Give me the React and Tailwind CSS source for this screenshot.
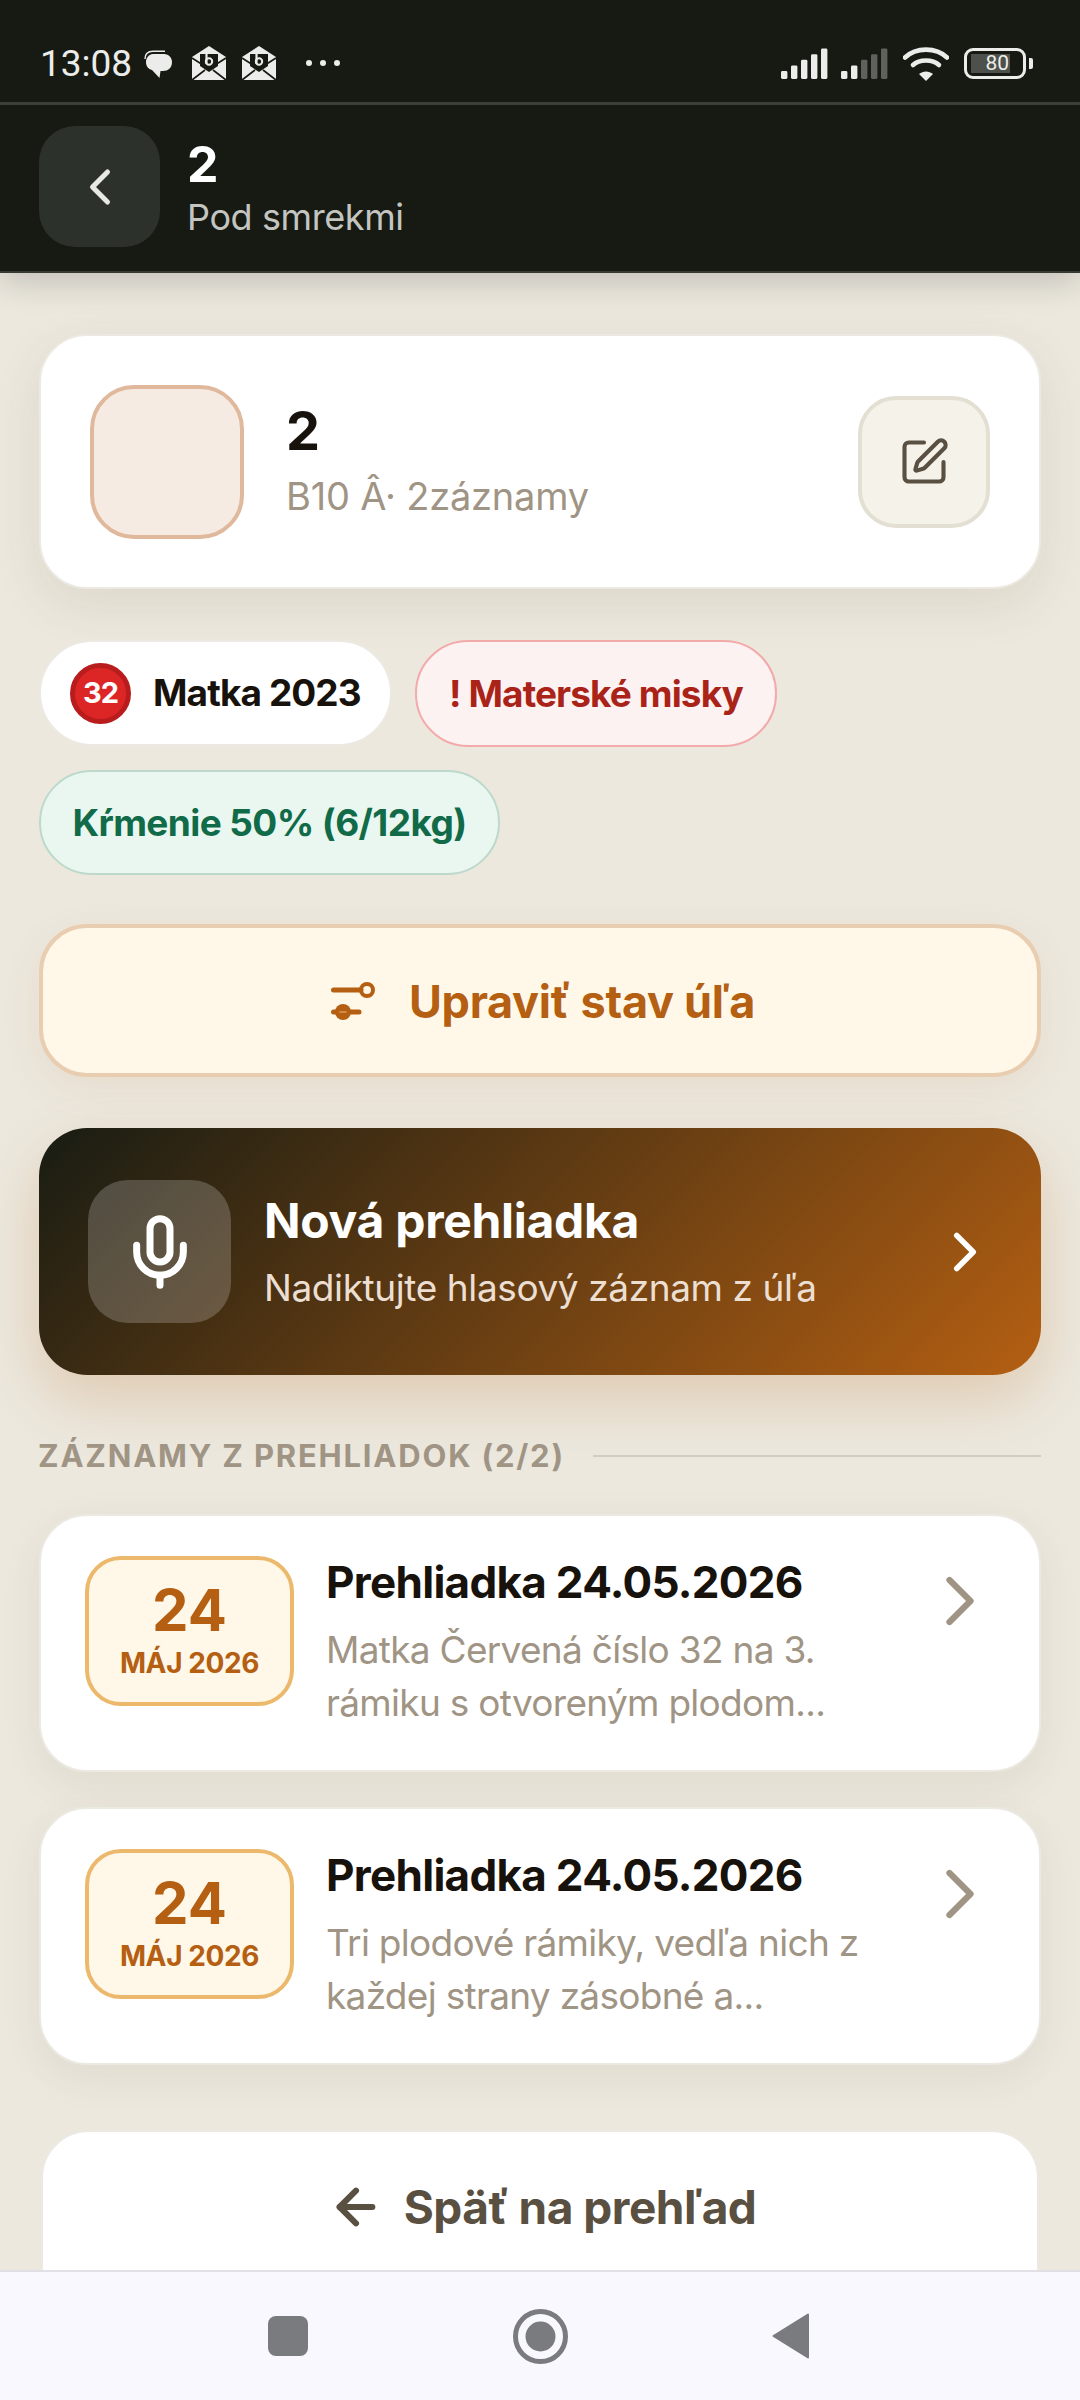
import { ChevronLeft, ChevronRight, SquarePen, Mic, ArrowLeft } from 'lucide-react';

const records = [
  { text: ['Matka Červená číslo 32 na 3.', 'rámiku s otvoreným plodom...'] },
  { text: ['Tri plodové rámiky, vedľa nich z', 'každej strany zásobné a...'] },
];

function Signal({ dim }) {
  const bars = [0, 1, 2, 3, 4];
  return (
    <svg width="48" height="31" viewBox="0 0 48 31">
      {bars.map((i) => {
        const h = 8 + i * 5.6;
        return (
          <rect
            key={i}
            x={i * 10}
            y={31 - h}
            width="6.4"
            height={h}
            rx="1.4"
            fill={dim && i >= 2 ? '#5f625c' : '#ececea'}
          />
        );
      })}
    </svg>
  );
}

function Envelope() {
  return (
    <svg width="36" height="35" viewBox="0 0 36 35">
      <path d="M18 0 L35 11 L35 34 L1 34 L1 11 Z" fill="#ececea" />
      <path d="M1 12 L12 19 M35 12 L24 19 M1 34 L14 24 M35 34 L22 24" stroke="#161a13" strokeWidth="1.6" />
      <path d="M9 8 H27 V20 L18 26 L9 20 Z" fill="#161a13" />
      <path d="M15.5 8 V18" stroke="#ececea" strokeWidth="2.2" />
      <circle cx="18" cy="15.5" r="3.2" fill="none" stroke="#ececea" strokeWidth="2" />
    </svg>
  );
}

function StatusBar() {
  return (
    <div className="h-[102px] flex items-end justify-between pl-[40px] pr-[47px] pb-[21px] font-['Roboto',sans-serif] text-[#ececea]">
      <div className="flex items-center">
        <span className="text-[37px] leading-[34px]">13:08</span>
        <svg className="ml-[12px]" width="29" height="29" viewBox="0 0 29 29">
          <path d="M1 9 C1 4 4 1.200 9 1.200 H21" stroke="#ececea" strokeWidth="1.400" fill="none" />
          <path d="M9 4 H20 C25 4 28 8 28 12 C28 18 24 21 19 21 H16.500 L15.500 28 L8 20 C4 19 2 16 2 12 C2 8 5 4 9 4 Z" fill="#ececea" />
        </svg>
        <div className="flex gap-[14px] ml-[18px] -mt-[2px]">
          <Envelope />
          <Envelope />
        </div>
        <div className="flex gap-[8px] ml-[29px] -mt-[2px]">
          <span className="w-[6px] h-[6px] rounded-full bg-[#ececea]" />
          <span className="w-[6px] h-[6px] rounded-full bg-[#ececea]" />
          <span className="w-[6px] h-[6px] rounded-full bg-[#ececea]" />
        </div>
      </div>
      <div className="flex items-center">
        <Signal />
        <div className="ml-[12px]"><Signal dim /></div>
        <svg className="ml-[14px]" width="46" height="35" viewBox="0 0 46 35">
          <path d="M2 11.500 C13 1 33 1 44 11.500" fill="none" stroke="#ececea" strokeWidth="4.600" strokeLinecap="round" />
          <path d="M10 19 C16.500 13 29.500 13 36 19" fill="none" stroke="#ececea" strokeWidth="4.600" strokeLinecap="round" />
          <path d="M23 35 L16 28 C20 24.500 26 24.500 30 28 Z" fill="#ececea" />
        </svg>
        <div className="ml-[15px] w-[62px] h-[31px] rounded-[9px] border-[3px] border-[#ececea] flex items-center pl-[4px]">
          <div className="w-[39px] h-[19px] bg-[#4d504b] flex items-center justify-end pr-[1px] text-[21px] leading-none">80</div>
        </div>
        <div className="ml-[3px] w-[4px] h-[11px] rounded-r-[2px] bg-[#ececea]" />
      </div>
    </div>
  );
}

function Header() {
  return (
    <div className="relative z-10 bg-[#161a13] h-[273px] border-b-2 border-[#363a32] shadow-[0_8px_32px_rgba(22,26,19,0.2)]">
      <StatusBar />
      <div className="h-[3px] bg-[#3a4039]" />
      <div className="flex items-center pl-[39px] pt-[21px]">
        <div className="w-[121px] h-[121px] rounded-[36px] bg-[#2d312b] flex items-center justify-center">
          <ChevronLeft size={60} strokeWidth={2} className="text-[#e8e8e4]" />
        </div>
        <div className="ml-[27px] mt-[1px]">
          <div className="text-[50px] leading-[58px] font-bold text-white">2</div>
          <div className="mt-[1px] text-[36px] leading-[46px] tracking-[-0.4px] text-[#c4c5c1]">Pod smrekmi</div>
        </div>
      </div>
    </div>
  );
}

function HiveCard() {
  return (
    <div className="h-[255px] rounded-[48px] bg-white border-2 border-[#ece9e2] shadow-[0_16px_50px_rgba(90,70,40,0.10)] flex items-center pl-[49px] pr-[49px]">
      <div className="w-[154px] h-[154px] rounded-[44px] bg-[#f5ebe2] border-[4px] border-[#e0b89c]" />
      <div className="ml-[42px] flex-1">
        <div className="-mt-[3px] text-[54px] leading-[62px] font-bold text-[#17120c]">2</div>
        <div className="mt-[10px] text-[38px] leading-[48px] tracking-[-0.2px] text-[#a09484]">B10 Â· 2záznamy</div>
      </div>
      <div className="w-[132px] h-[132px] rounded-[38px] bg-[#f5f2ea] border-[4px] border-[#e3dfd3] flex items-center justify-center">
        <SquarePen size={52} strokeWidth={1.9} className="text-[#5a5042]" />
      </div>
    </div>
  );
}

function Chips() {
  return (
    <div className="mt-[51px] flex flex-wrap gap-x-[23px] gap-y-[23px]">
      <div className="w-[353px] h-[106px] rounded-[53px] bg-white border-2 border-[#ece9e2] flex items-center pl-[29px]">
        <div className="w-[61px] h-[61px] rounded-full bg-[#dc2626] border-[5px] border-[#b91c1c] flex items-center justify-center text-white text-[29px] font-bold tracking-[-1px]">32</div>
        <span className="ml-[22px] text-[37px] font-bold tracking-[-0.9px] text-[#17120c]">Matka 2023</span>
      </div>
      <div className="w-[362px] h-[107px] rounded-[53px] bg-[#fdf2f2] border-2 border-[#f3aaaa] flex items-center justify-center text-[37px] font-bold tracking-[-0.9px] text-[#aa2318]">! Materské misky</div>
      <div className="w-[461px] h-[105px] rounded-[53px] bg-[#e9f7f0] border-2 border-[#bcd9cb] flex items-center justify-center text-[37px] font-bold tracking-[-0.6px] text-[#116a48]">Kŕmenie 50% (6/12kg)</div>
    </div>
  );
}

function HiveStateButton() {
  return (
    <div className="mt-[49px] h-[153px] rounded-[48px] bg-[#fff8e9] border-[4px] border-[#e8cdb0] shadow-[0_12px_40px_rgba(176,94,18,0.08)] flex items-center justify-center text-[#b45f12]">
      <svg className="ml-[6px]" width="44" height="40" viewBox="0 0 44 40" fill="none" stroke="currentColor" strokeLinecap="round">
        <path d="M2.500 9 H30" strokeWidth="5" />
        <circle cx="36" cy="9" r="6" strokeWidth="4" />
        <path d="M2.500 31 H28" strokeWidth="5" />
        <circle cx="12" cy="31" r="8" fill="currentColor" stroke="none" />
        <path d="M9 31 H15" stroke="#d99a5c" strokeWidth="1.500" />
      </svg>
      <span className="ml-[34px] mt-[3px] text-[45px] font-bold tracking-[-0.3px]">Upraviť stav úľa</span>
    </div>
  );
}

function NewInspection() {
  return (
    <div className="mt-[51px] h-[247px] rounded-[48px] bg-[linear-gradient(135deg,#181c13,#b45f12)] shadow-[0_24px_60px_rgba(176,94,18,0.22)] flex items-center pl-[49px] pr-[43px]">
      <div className="w-[143px] h-[143px] rounded-[40px] bg-white/20 flex items-center justify-center">
        <Mic size={80} strokeWidth={2.1} className="text-white" />
      </div>
      <div className="ml-[33px] flex-1">
        <div className="text-[48px] leading-[58px] font-bold tracking-[-0.3px] text-white">Nová prehliadka</div>
        <div className="mt-[15px] text-[37px] leading-[46px] tracking-[-0.4px] text-[#ecdfd2]">Nadiktujte hlasový záznam z úľa</div>
      </div>
      <ChevronRight size={66} strokeWidth={2} className="text-white" />
    </div>
  );
}

function RecordCard({ lines }) {
  return (
    <div className="h-[258px] rounded-[48px] bg-white border-2 border-[#ece9e2] shadow-[0_12px_40px_rgba(90,70,40,0.08)] flex items-start pl-[44px] pr-[37px] pt-[40px]">
      <div className="w-[209px] h-[150px] shrink-0 rounded-[36px] bg-[#fff7e8] border-[4px] border-[#ecb96c] flex flex-col items-center justify-center text-[#b45f12]">
        <div className="-mt-[3px] text-[58px] leading-[62px] font-bold">24</div>
        <div className="mt-[4px] text-[28px] leading-[36px] font-bold tracking-[-0.4px]">MÁJ 2026</div>
      </div>
      <div className="ml-[32px] flex-1 -mt-[3px]">
        <div className="text-[44px] leading-[58px] font-bold tracking-[-0.7px] text-[#17120c]">Prehliadka 24.05.2026</div>
        <div className="mt-[12px] text-[37px] leading-[53px] tracking-[-0.7px] text-[#a09484]">
          {lines.map((l) => <div key={l}>{l}</div>)}
        </div>
      </div>
      <ChevronRight size={84} strokeWidth={1.8} className="text-[#a09484] mt-[3px] shrink-0" />
    </div>
  );
}

export default function App() {
  return (
    <div className="relative w-[1080px] h-[2400px] overflow-hidden bg-[#ece8de] font-['Inter',sans-serif]">
      <Header />
      <div className="px-[39px] pt-[61px]">
        <HiveCard />
        <Chips />
        <HiveStateButton />
        <NewInspection />

        <div className="mt-[59px] -ml-[1px] flex items-center">
          <span className="text-[31px] leading-[44px] font-bold tracking-[1.800px] text-[#a09484]">ZÁZNAMY Z PREHLIADOK (2/2)</span>
          <div className="ml-[28px] flex-1 h-[2px] bg-[#d4ccc0]" />
        </div>

        <div className="mt-[36px] flex flex-col gap-[35px]">
          {records.map((r, i) => <RecordCard key={i} lines={r.text} />)}
        </div>

        <div className="mt-[65px] mx-[2px] h-[200px] rounded-[48px] bg-white border-2 border-[#ece9e2] flex items-start justify-center pt-[45px] text-[#5a5042]">
          <ArrowLeft size={56} strokeWidth={2.6} className="ml-[4px] mt-[2px]" />
          <span className="ml-[20px] text-[46px] leading-[60px] font-bold tracking-[-0.5px]">Späť na prehľad</span>
        </div>
      </div>

      {/* android nav */}
      <div className="absolute bottom-0 left-0 w-full h-[130px] bg-[#f8f8fe] border-t-2 border-[#e0e0e6] flex items-center justify-center pr-[4px]">
        <div className="w-[40px] h-[40px] rounded-[8px] bg-[#7a7b7f]" />
        <svg className="ml-[205px]" width="55" height="55" viewBox="0 0 55 55">
          <circle cx="27.500" cy="27.500" r="25" fill="none" stroke="#7a7b7f" strokeWidth="5" />
          <circle cx="27.500" cy="27.500" r="15" fill="#7a7b7f" />
        </svg>
        <svg className="ml-[204px]" width="37" height="46" viewBox="0 0 37 46">
          <path d="M36 1.500 V44.500 L1.500 23 Z" fill="#7a7b7f" stroke="#7a7b7f" strokeWidth="2" strokeLinejoin="round" />
        </svg>
      </div>
    </div>
  );
}
